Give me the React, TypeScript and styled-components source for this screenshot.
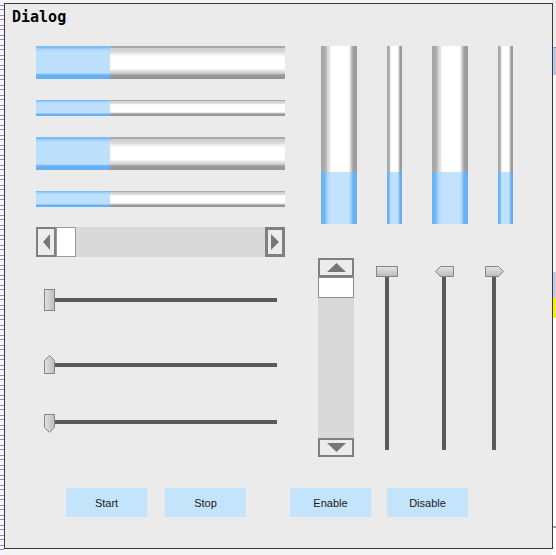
import React from "react";
import styled, { createGlobalStyle } from "styled-components";

const GlobalStyle = createGlobalStyle`
  html, body { margin: 0; padding: 0; }
  body { font-family: "Liberation Sans", Arial, sans-serif; overflow: hidden; }
`;

const Page = styled.div`
  box-sizing: border-box;
  width: 556px;
  height: 555px;
  padding: 3px 0 0 4px;
  background:
    linear-gradient(to bottom, #ececec 0 47px, #8f9fcf 47px 48px, #b9c5e5 48px 75px, #f6f6f6 75px 272px,
      #c3cbe5 272px 298px, #f2f200 298px 318px, #ffffff 318px 526px, #9aa4b8 526px 528px, #ffffff 528px)
      right top / 4px 100% no-repeat,
    repeating-linear-gradient(to bottom, #f4f6fb 0 5px, #7f95cf 5px 6px, #ffffff 6px 9px, #c070d0 9px 10px)
      left top / 4px 100% no-repeat,
    #f4f4f4;
`;

const Dialog = styled.div`
  box-sizing: border-box;
  width: 549px;
  height: 546px;
  border: 1px solid #3a3a3a;
  background: #ebebeb;
  display: flex;
  flex-direction: column;
`;

const Title = styled.div`
  padding: 4px 0 0 7px;
  height: 18px;
  font: bold 15px/18px "DejaVu Sans Mono", "Noto Sans CJK JP", monospace;
  color: #000;
`;

const TopSection = styled.div`
  display: flex;
  align-items: flex-start;
  margin-top: 20px;
  padding-left: 31px;
`;

const LeftCol = styled.div`
  width: 249px;
  display: flex;
  flex-direction: column;
  gap: 21px;
`;

const HBar = styled.div<{ $thick?: boolean }>`
  display: flex;
  height: ${(p) => (p.$thick ? 33 : 16)}px;
  background: ${(p) =>
    p.$thick
      ? `linear-gradient(to bottom, #a9a9a9 0 2px, #cdcdcd 2px, #d9d9d9 6px, #efefef 8px, #ffffff 11px,
         #ffffff 23px, #e8e8e8 24px, #dcdcdc 26px, #bdbdbd 28px, #9a9a9a 29px, #949494 33px)`
      : `linear-gradient(to bottom, #a9a9a9 0 1px, #d2d2d2 1px 3px, #f2f2f2 4px, #ffffff 5px,
         #ffffff 12px, #d6d6d6 13px, #9a9a9a 14px, #949494 16px)`};
`;

const HFill = styled.div<{ $thick?: boolean }>`
  height: 100%;
  background: ${(p) =>
    p.$thick
      ? `linear-gradient(to bottom, #7cbef8 0 2px, #a9d4fb 3px, #bde0fd 6px, #bde0fd 27px, #8cc7fa 28px, #6ab2f4 29px, #66aef2 33px)`
      : `linear-gradient(to bottom, #7cbef8 0 1px, #b0d8fc 2px, #bde0fd 4px, #bde0fd 13px, #6ab2f4 14px, #66aef2 16px)`};
`;

const HScroll = styled.div`
  display: flex;
  height: 30px;
  margin-top: -1px;
  background: #d9d9d9;
`;

const ScrollBtn = styled.div<{ $bw: number; $end?: boolean }>`
  box-sizing: border-box;
  width: 20px;
  height: 100%;
  border: ${(p) => p.$bw}px solid #808080;
  background: #ececec;
  display: flex;
  align-items: center;
  justify-content: center;
  margin-left: ${(p) => (p.$end ? "auto" : "0")};
`;

const HThumb = styled.div`
  box-sizing: border-box;
  width: 20px;
  height: 100%;
  background: #fff;
  border: 1px solid #9a9a9a;
`;

const BarsRow = styled.div`
  display: flex;
  gap: 30px;
  margin-left: 36px;
`;

const VBar = styled.div<{ $wide?: boolean }>`
  width: ${(p) => (p.$wide ? 36 : 15)}px;
  height: 178px;
  display: flex;
  flex-direction: column;
  justify-content: flex-end;
  background: ${(p) =>
    p.$wide
      ? `linear-gradient(to right, #a5a5a5 0, #b0b0b0 5px, #d2d2d2 6px, #e8e8e8 9px, #ffffff 10px, #ffffff 28px, #e4e4e4 29px, #cfcfcf 30px, #a2a2a2 32px, #999999 36px)`
      : `linear-gradient(to right, #a8a8a8 0 2px, #d4d4d4 3px, #ffffff 4px, #ffffff 11px, #cccccc 12px, #9c9c9c 13px, #999999 15px)`};
`;

const VFill = styled.div<{ $wide?: boolean }>`
  height: 52px;
  background: ${(p) =>
    p.$wide
      ? `linear-gradient(to right, #6ab2f4 0, #74b8f6 4px, #a9d3fb 6px, #c2e2fd 10px, #c2e2fd 28px, #9fcefb 30px, #6ab2f4 32px, #66aef2 36px)`
      : `linear-gradient(to right, #6ab2f4 0 2px, #a5d1fb 3px, #c0e1fd 4px, #c0e1fd 11px, #8cc6fa 12px, #66aef2 13px, #66aef2 15px)`};
`;

const MiddleSection = styled.div`
  display: flex;
  align-items: flex-start;
`;

const SliderCol = styled.div`
  width: 233px;
  margin: 32px 0 0 39px;
  display: flex;
  flex-direction: column;
`;

const HSliderRow = styled.div<{ $gapTop: number }>`
  display: flex;
  align-items: flex-start;
  margin-top: ${(p) => p.$gapTop}px;
`;

const HTrack = styled.div<{ $offset: number }>`
  flex: 1;
  height: 4px;
  margin-top: ${(p) => p.$offset}px;
  background: #5a5a5a;
`;

const RightGroup = styled.div`
  display: flex;
  align-items: flex-start;
  margin: 1px 0 0 41px;
`;

const VScroll = styled.div`
  width: 36px;
  height: 199px;
  display: flex;
  flex-direction: column;
  background: #d9d9d9;
`;

const VScrollBtn = styled.div<{ $end?: boolean }>`
  box-sizing: border-box;
  height: 19px;
  border: 2px solid #808080;
  background: #ececec;
  display: flex;
  align-items: center;
  justify-content: center;
  margin-top: ${(p) => (p.$end ? "auto" : "0")};
`;

const VThumb = styled.div`
  box-sizing: border-box;
  height: 21px;
  background: #fff;
  border: 1px solid #8a8a8a;
`;

const VSliderBox = styled.div<{ $gapLeft: number }>`
  display: flex;
  flex-direction: column;
  margin: 8px 0 0 ${(p) => p.$gapLeft}px;
`;

const VTrack = styled.div<{ $offset: number }>`
  width: 4px;
  height: 173px;
  margin-left: ${(p) => p.$offset}px;
  background: #5a5a5a;
`;

const ButtonRow = styled.div`
  display: flex;
  margin-top: 31px;
  padding-left: 61px;
`;

const Button = styled.button<{ $gapLeft?: number }>`
  width: 81px;
  height: 29px;
  margin-left: ${(p) => p.$gapLeft ?? 0}px;
  border: none;
  padding: 0;
  background: #c4e4fc;
  color: #1a1a1a;
  font: 11px "Liberation Sans", Arial, sans-serif;
`;

const Defs = () => (
  <svg width="0" height="0" style={{ position: "absolute" }}>
    <defs>
      <linearGradient id="hg" x1="0" y1="0" x2="1" y2="0">
        <stop offset="0" stopColor="#e2e2e2" />
        <stop offset="1" stopColor="#bdbdbd" />
      </linearGradient>
      <linearGradient id="vg" x1="0" y1="0" x2="0" y2="1">
        <stop offset="0" stopColor="#e4e4e4" />
        <stop offset="1" stopColor="#bababa" />
      </linearGradient>
    </defs>
  </svg>
);

type HKind = "rect" | "up" | "down";
const HHandle = ({ kind }: { kind: HKind }) => {
  if (kind === "rect")
    return (
      <svg width="11" height="22" viewBox="0 0 11 22">
        <rect x="0.5" y="0.5" width="10" height="21" fill="url(#hg)" stroke="#858585" />
      </svg>
    );
  const pts = kind === "up" ? "5.5,0.5 10.5,5.5 10.5,18.5 0.5,18.5 0.5,5.5" : "0.5,0.5 10.5,0.5 10.5,13.5 5.5,18.5 0.5,13.5";
  return (
    <svg width="11" height="19" viewBox="0 0 11 19">
      <polygon points={pts} fill="url(#hg)" stroke="#858585" />
    </svg>
  );
};

type VKind = "rect" | "left" | "right";
const VHandle = ({ kind }: { kind: VKind }) => {
  if (kind === "rect")
    return (
      <svg width="22" height="11" viewBox="0 0 22 11">
        <rect x="0.5" y="0.5" width="21" height="10" fill="url(#vg)" stroke="#858585" />
      </svg>
    );
  const pts = kind === "left" ? "0.5,5.5 5.5,0.5 18.5,0.5 18.5,10.5 5.5,10.5" : "0.5,0.5 13.5,0.5 18.5,5.5 13.5,10.5 0.5,10.5";
  return (
    <svg width="19" height="11" viewBox="0 0 19 11">
      <polygon points={pts} fill="url(#vg)" stroke="#858585" />
    </svg>
  );
};

const Arrow = ({ dir }: { dir: "left" | "right" | "up" | "down" }) => {
  const c = "#777777";
  if (dir === "left")
    return (
      <svg width="7" height="16" viewBox="0 0 7 16">
        <polygon points="7,0 7,16 0,8" fill={c} />
      </svg>
    );
  if (dir === "right")
    return (
      <svg width="8" height="16" viewBox="0 0 8 16">
        <polygon points="0,0 0,16 8,8" fill={c} />
      </svg>
    );
  if (dir === "up")
    return (
      <svg width="19" height="9" viewBox="0 0 19 9">
        <polygon points="9.5,0 19,9 0,9" fill={c} />
      </svg>
    );
  return (
    <svg width="19" height="9" viewBox="0 0 19 9">
      <polygon points="0,0 19,0 9.5,9" fill={c} />
    </svg>
  );
};

const hBars: { thick: boolean; pct: number }[] = [
  { thick: true, pct: 74 },
  { thick: false, pct: 74 },
  { thick: true, pct: 74 },
  { thick: false, pct: 74 },
];

const vBars = [true, false, true, false];

export default function App() {
  return (
    <Page>
      <GlobalStyle />
      <Defs />
      <Dialog>
        <Title>Dialog</Title>
        <TopSection>
          <LeftCol>
            {hBars.map((b, i) => (
              <HBar key={i} $thick={b.thick}>
                <HFill $thick={b.thick} style={{ width: b.pct }} />
              </HBar>
            ))}
            <HScroll>
              <ScrollBtn $bw={2}>
                <Arrow dir="left" />
              </ScrollBtn>
              <HThumb />
              <ScrollBtn $bw={3} $end>
                <Arrow dir="right" />
              </ScrollBtn>
            </HScroll>
          </LeftCol>
          <BarsRow>
            {vBars.map((w, i) => (
              <VBar key={i} $wide={w}>
                <VFill $wide={w} />
              </VBar>
            ))}
          </BarsRow>
        </TopSection>
        <MiddleSection>
          <SliderCol>
            <HSliderRow $gapTop={0}>
              <HHandle kind="rect" />
              <HTrack $offset={9} />
            </HSliderRow>
            <HSliderRow $gapTop={44}>
              <HHandle kind="up" />
              <HTrack $offset={8} />
            </HSliderRow>
            <HSliderRow $gapTop={40}>
              <HHandle kind="down" />
              <HTrack $offset={6} />
            </HSliderRow>
          </SliderCol>
          <RightGroup>
            <VScroll>
              <VScrollBtn>
                <Arrow dir="up" />
              </VScrollBtn>
              <VThumb />
              <VScrollBtn $end>
                <Arrow dir="down" />
              </VScrollBtn>
            </VScroll>
            <VSliderBox $gapLeft={22}>
              <VHandle kind="rect" />
              <VTrack $offset={9} />
            </VSliderBox>
            <VSliderBox $gapLeft={37}>
              <VHandle kind="left" />
              <VTrack $offset={7} />
            </VSliderBox>
            <VSliderBox $gapLeft={31}>
              <VHandle kind="right" />
              <VTrack $offset={7} />
            </VSliderBox>
          </RightGroup>
        </MiddleSection>
        <ButtonRow>
          <Button>Start</Button>
          <Button $gapLeft={18}>Stop</Button>
          <Button $gapLeft={44}>Enable</Button>
          <Button $gapLeft={16}>Disable</Button>
        </ButtonRow>
      </Dialog>
    </Page>
  );
}
